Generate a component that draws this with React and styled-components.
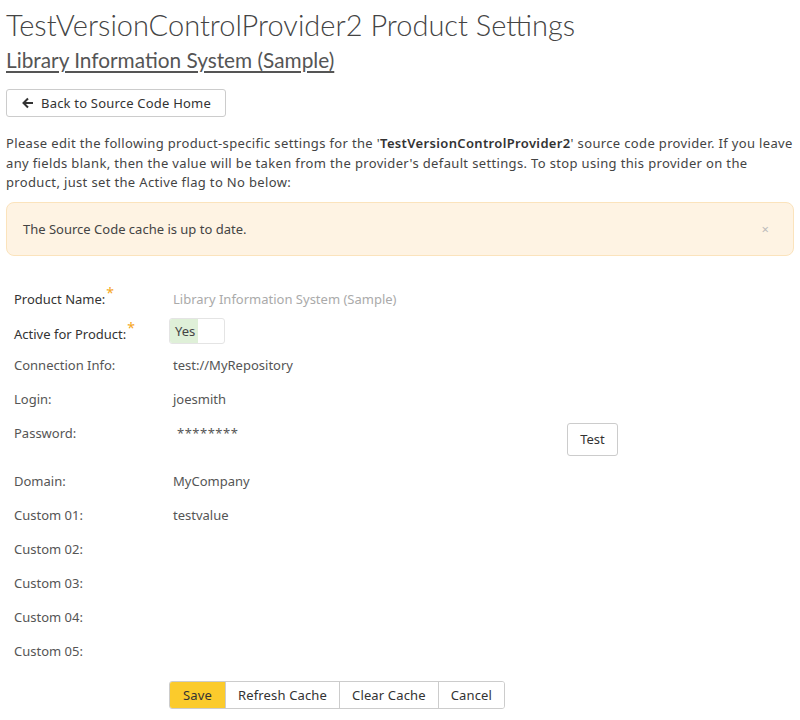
import React from 'react';
import styled, { createGlobalStyle } from 'styled-components';

const GlobalStyle = createGlobalStyle`
  body {
    margin: 0;
    background: #ffffff;
    font-family: "Noto Sans", Roboto, sans-serif;
    color: #333333;
  }
`;

const Page = styled.div`
  padding: 5px 6px 10px 6px;
`;

const Title = styled.h1`
  margin: 0;
  font-family: Lato, "Noto Sans", sans-serif;
  font-weight: 300;
  font-size: 29px;
  line-height: 40px;
  color: #444444;
`;

const ProductLink = styled.a`
  display: inline-block;
  margin-top: 2px;
  font-family: Lato, "Noto Sans", sans-serif;
  font-size: 20.8px;
  line-height: 26px;
  color: #555555;
  text-decoration: underline;
  text-underline-offset: 3px;
`;

const BackButton = styled.button`
  display: inline-flex;
  align-items: center;
  gap: 7px;
  margin-top: 16px;
  height: 28px;
  padding: 0 14px 0 15px;
  background: #ffffff;
  border: 1px solid #cccccc;
  border-radius: 3px;
  font-family: "Noto Sans", Roboto, sans-serif;
  font-size: 13px;
  letter-spacing: 0.2px;
  color: #333333;
`;

const Intro = styled.p`
  margin: 17px 0 0;
  font-size: 13px;
  line-height: 19.5px;
  letter-spacing: 0.35px;
  color: #444444;

  b {
    font-weight: 600;
    color: #333333;
  }
`;

const Alert = styled.div`
  display: flex;
  align-items: center;
  justify-content: space-between;
  margin-top: 9px;
  height: 52px;
  padding: 0 24px 0 16px;
  background: #fef3e3;
  border: 1px solid #fbe3bc;
  border-radius: 8px;
  font-size: 13px;
  color: #444444;
`;

const Close = styled.span`
  font-size: 13px;
  color: #bbbbbb;
`;

const Form = styled.div`
  display: flex;
  flex-direction: column;
  margin-top: 34px;
  padding-left: 8px;
`;

const Row = styled.div`
  display: grid;
  grid-template-columns: 159px 394px auto;
  align-items: start;
  min-height: ${(p) => p.h || 34}px;
  font-size: 13px;
  color: #555555;
`;

const Label = styled.div`
  color: ${(p) => (p.required ? '#333333' : '#555555')};
`;

const Star = styled.sup`
  color: #f5a623;
  font-size: 14px;
  line-height: 0;
  margin-left: 1px;
  vertical-align: 6px;
`;

const Value = styled.div`
  padding-left: ${(p) => p.pl || 0}px;
  color: ${(p) => (p.muted ? '#aaaaaa' : '#555555')};
  letter-spacing: ${(p) => (p.spaced ? '0.5px' : 'normal')};
`;

const ToggleCell = styled.div`
  margin-top: -7px;
`;

const Toggle = styled.div`
  display: flex;
  width: 54px;
  height: 24px;
  margin-left: -4px;
  border: 1px solid #e4e4e4;
  border-radius: 3px;
  overflow: hidden;
`;

const ToggleOn = styled.span`
  display: flex;
  align-items: center;
  padding: 0 5px;
  width: 18px;
  background: #dff0d8;
  color: #444444;
`;

const TestButton = styled.button`
  margin-top: -1px;
  width: 51px;
  height: 33px;
  background: #ffffff;
  border: 1px solid #cccccc;
  border-radius: 3px;
  font-family: "Noto Sans", Roboto, sans-serif;
  font-size: 13px;
  color: #333333;
`;

const ButtonGroup = styled.div`
  display: flex;
  margin-top: 5px;
  margin-left: 163px;
  width: fit-content;
  border: 1px solid #cccccc;
  border-radius: 3px;
  overflow: hidden;
`;

const GroupButton = styled.button`
  height: 26px;
  padding: 0 ${(p) => p.px || 12}px;
  background: ${(p) => (p.primary ? '#fbcb2c' : '#ffffff')};
  border: none;
  border-left: ${(p) => (p.primary ? 'none' : '1px solid #cccccc')};
  font-family: "Noto Sans", Roboto, sans-serif;
  font-size: 13px;
  letter-spacing: 0.15px;
  color: #333333;
`;

const ArrowLeft = () => (
  <svg width="12" height="12" viewBox="0 0 12 12" fill="none" stroke="#333" strokeWidth="2">
    <path d="M11 6H2M6 1.5L1.5 6L6 10.5" />
  </svg>
);

const fields = [
  ['Connection Info:', 'test://MyRepository'],
  ['Login:', 'joesmith'],
];

const customs = [
  ['Domain:', 'MyCompany'],
  ['Custom 01:', 'testvalue'],
  ['Custom 02:', ''],
  ['Custom 03:', ''],
  ['Custom 04:', ''],
  ['Custom 05:', ''],
];

export default function App() {
  return (
    <Page>
      <GlobalStyle />
      <Title>TestVersionControlProvider2 Product Settings</Title>
      <ProductLink>Library Information System (Sample)</ProductLink>
      <div>
        <BackButton>
          <ArrowLeft />
          Back to Source Code Home
        </BackButton>
      </div>
      <Intro>
        Please edit the following product-specific settings for the '<b>TestVersionControlProvider2</b>' source code
        provider. If you leave any fields blank, then the value will be taken from the provider's default settings. To
        stop using this provider on the product, just set the Active flag to No below:
      </Intro>
      <Alert>
        The Source Code cache is up to date.
        <Close>×</Close>
      </Alert>
      <Form>
        <Row h={35}>
          <Label required>
            Product Name:<Star>*</Star>
          </Label>
          <Value muted>Library Information System (Sample)</Value>
        </Row>
        <Row h={31}>
          <Label required>
            Active for Product:<Star>*</Star>
          </Label>
          <ToggleCell>
            <Toggle>
              <ToggleOn>Yes</ToggleOn>
            </Toggle>
          </ToggleCell>
        </Row>
        {fields.map(([l, v]) => (
          <Row key={l}>
            <Label>{l}</Label>
            <Value>{v}</Value>
          </Row>
        ))}
        <Row h={48}>
          <Label>Password:</Label>
          <Value pl={4} spaced>********</Value>
          <TestButton>Test</TestButton>
        </Row>
        {customs.map(([l, v]) => (
          <Row key={l}>
            <Label>{l}</Label>
            <Value>{v}</Value>
          </Row>
        ))}
      </Form>
      <ButtonGroup>
        <GroupButton primary px={13}>Save</GroupButton>
        <GroupButton>Refresh Cache</GroupButton>
        <GroupButton>Clear Cache</GroupButton>
        <GroupButton>Cancel</GroupButton>
      </ButtonGroup>
    </Page>
  );
}
